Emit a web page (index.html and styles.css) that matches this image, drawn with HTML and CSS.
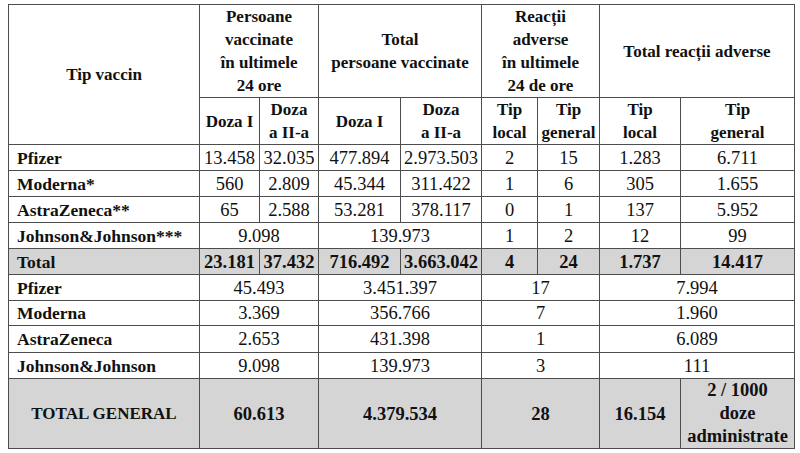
FILE: index.html
```html
<!DOCTYPE html>
<html lang="ro">
<head>
<meta charset="utf-8">
<title>Vaccinare</title>
<link rel="stylesheet" href="styles.css">
</head>
<body>
<table class="vac">
  <colgroup>
    <col class="c1"><col class="c2"><col class="c3"><col class="c4"><col class="c5"><col class="c6"><col class="c7"><col class="c8"><col class="c9">
  </colgroup>
  <thead>
    <tr class="h1">
      <th rowspan="2" class="hd">Tip vaccin</th>
      <th colspan="2" class="hd">Persoane<br>vaccinate<br>în ultimele<br>24 ore</th>
      <th colspan="2" class="hd">Total<br>persoane vaccinate</th>
      <th colspan="2" class="hd">Reacții<br>adverse<br>în ultimele<br>24 de ore</th>
      <th colspan="2" class="hd">Total reacții adverse</th>
    </tr>
    <tr class="h2">
      <th class="hd">Doza I</th>
      <th class="hd">Doza<br>a II-a</th>
      <th class="hd">Doza I</th>
      <th class="hd">Doza<br>a II-a</th>
      <th class="hd">Tip<br>local</th>
      <th class="hd">Tip<br>general</th>
      <th class="hd">Tip<br>local</th>
      <th class="hd">Tip<br>general</th>
    </tr>
  </thead>
  <tbody>
    <tr class="r">
      <td class="lbl">Pfizer</td>
      <td class="n">13.458</td><td class="n">32.035</td><td class="n">477.894</td><td class="n">2.973.503</td>
      <td class="n">2</td><td class="n">15</td><td class="n">1.283</td><td class="n">6.711</td>
    </tr>
    <tr class="r">
      <td class="lbl">Moderna*</td>
      <td class="n">560</td><td class="n">2.809</td><td class="n">45.344</td><td class="n">311.422</td>
      <td class="n">1</td><td class="n">6</td><td class="n">305</td><td class="n">1.655</td>
    </tr>
    <tr class="r">
      <td class="lbl">AstraZeneca**</td>
      <td class="n">65</td><td class="n">2.588</td><td class="n">53.281</td><td class="n">378.117</td>
      <td class="n">0</td><td class="n">1</td><td class="n">137</td><td class="n">5.952</td>
    </tr>
    <tr class="r">
      <td class="lbl">Johnson&amp;Johnson***</td>
      <td class="n" colspan="2">9.098</td><td class="n" colspan="2">139.973</td>
      <td class="n">1</td><td class="n">2</td><td class="n">12</td><td class="n">99</td>
    </tr>
    <tr class="r tot">
      <td class="lbl">Total</td>
      <td class="n b">23.181</td><td class="n b">37.432</td><td class="n b">716.492</td><td class="n b">3.663.042</td>
      <td class="n b">4</td><td class="n b">24</td><td class="n b">1.737</td><td class="n b">14.417</td>
    </tr>
    <tr class="r">
      <td class="lbl">Pfizer</td>
      <td class="n" colspan="2">45.493</td><td class="n" colspan="2">3.451.397</td>
      <td class="n" colspan="2">17</td><td class="n" colspan="2">7.994</td>
    </tr>
    <tr class="r r25">
      <td class="lbl">Moderna</td>
      <td class="n" colspan="2">3.369</td><td class="n" colspan="2">356.766</td>
      <td class="n" colspan="2">7</td><td class="n" colspan="2">1.960</td>
    </tr>
    <tr class="r r27">
      <td class="lbl">AstraZeneca</td>
      <td class="n" colspan="2">2.653</td><td class="n" colspan="2">431.398</td>
      <td class="n" colspan="2">1</td><td class="n" colspan="2">6.089</td>
    </tr>
    <tr class="r">
      <td class="lbl">Johnson&amp;Johnson</td>
      <td class="n" colspan="2">9.098</td><td class="n" colspan="2">139.973</td>
      <td class="n" colspan="2">3</td><td class="n" colspan="2">111</td>
    </tr>
    <tr class="gen">
      <td class="hd">TOTAL GENERAL</td>
      <td class="n b" colspan="2">60.613</td><td class="n b" colspan="2">4.379.534</td>
      <td class="n b" colspan="2">28</td><td class="n b">16.154</td>
      <td class="n b ml">2 / 1000<br>doze<br>administrate</td>
    </tr>
  </tbody>
</table>
</body>
</html>
```

FILE: styles.css
```css
html, body {
  background: #ffffff;
}
body {
  margin: 0;
  padding: 4px 0 0 8px;
  font-family: "Liberation Serif", "Times New Roman", serif;
  color: #111111;
}
.vac {
  border-collapse: collapse;
  table-layout: fixed;
  width: 786px;
}
.vac th, .vac td {
  border: 1px solid #4d4d4d;
  padding: 0;
  vertical-align: middle;
  overflow: hidden;
  white-space: nowrap;
}
.c1 { width: 191px; }
.c2 { width: 60px; }
.c3 { width: 59px; }
.c4 { width: 82px; }
.c5 { width: 81px; }
.c6 { width: 56px; }
.c7 { width: 62px; }
.c8 { width: 81px; }
.c9 { width: 114px; }

.vac .hd {
  font-weight: bold;
  font-size: 17px;
  line-height: 23px;
  text-align: center;
}
.h1 { height: 93px; }
.h2 { height: 46px; }
.r { height: 26px; }
.r25 { height: 25px; }
.r27 { height: 27px; }
.gen { height: 70px; background: #d5d5d5; }
.tot { background: #d5d5d5; }

.vac .lbl {
  font-weight: bold;
  font-size: 17.5px;
  line-height: 20px;
  text-align: left;
  padding-left: 8px;
}
.vac .n {
  font-size: 18.5px;
  line-height: 20px;
  text-align: center;
}
.vac .b { font-weight: bold; }
.vac .ml { line-height: 23px; }
```
